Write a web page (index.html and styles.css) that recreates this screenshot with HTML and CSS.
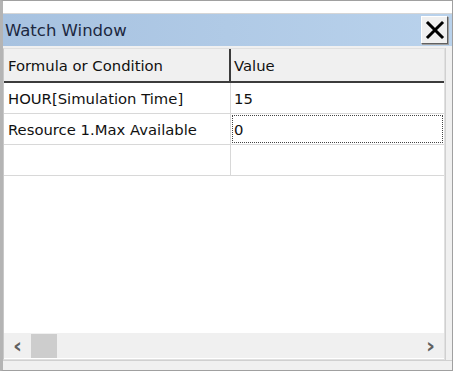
FILE: index.html
```html
<!DOCTYPE html>
<html>
<head>
<meta charset="utf-8">
<link rel="stylesheet" href="styles.css">
</head>
<body>
<div class="win">
  <div class="topstrip"></div>
  <div class="titlebar">
    <span class="title">Watch Window</span>
    <div class="close">
      <svg width="20" height="20" viewBox="0 0 20 20"><path d="M3 3 L17 17 M17 3 L3 17" stroke="#000" stroke-width="3" stroke-linecap="square"/></svg>
    </div>
  </div>
  <div class="panel">
    <div class="gridwrap">
      <div class="grid">
        <div class="row head">
          <div class="c1">Formula or Condition</div>
          <div class="c2">Value</div>
        </div>
        <div class="row">
          <div class="c1">HOUR[Simulation Time]</div>
          <div class="c2">15</div>
        </div>
        <div class="row">
          <div class="c1">Resource 1.Max Available</div>
          <div class="c2 focus">0</div>
        </div>
        <div class="row">
          <div class="c1"></div>
          <div class="c2"></div>
        </div>
      </div>
      <div class="hscroll">
        <span class="arrow">&lsaquo;</span>
        <div class="thumb"></div>
        <div class="track"></div>
        <span class="arrow">&rsaquo;</span>
      </div>
    </div>
    <div class="vedge"></div>
  </div>
  <div class="bottom"></div>
</div>
</body>
</html>
```
FILE: styles.css
```css
html, body { margin: 0; padding: 0; }
body { width: 453px; height: 371px; background: #fff; overflow: hidden; font-family: "DejaVu Sans", sans-serif; }
.win { width: 453px; height: 371px; box-sizing: border-box; border: 1px solid #a0a0a0; border-left: 3px solid #b4b4b4; display: flex; flex-direction: column; background: #fff; }
.topstrip { height: 12px; background: #fff; border-bottom: 1px solid #d6d6d6; }
.titlebar { height: 32px; background: linear-gradient(to right, #a7c2e0, #b9d2ec); display: flex; align-items: center; justify-content: space-between; padding-left: 2px; }
.title { font-family: "DejaVu Sans", sans-serif; font-size: 16.5px; color: #1c2840; margin-top: 1px; }
.close { width: 27px; height: 28px; box-sizing: border-box; background: #f0f0f0; border: 1px solid #fff; border-right-color: #606060; border-bottom-color: #606060; box-shadow: 1px 1px 0 #a0a0a0; display: flex; align-items: center; justify-content: center; margin-right: 4px; }
.panel { flex: 1; display: flex; background: #f0f0f0; border-top: 2px solid #f0f0f0; }
.gridwrap { flex: 1; display: flex; flex-direction: column; border: 1px solid #e0e0e0; border-left: 1px solid #c8c8c8; background: #fff; }
.grid { flex: 1; }
.row { display: flex; height: 30px; border-bottom: 1px solid #d8d8d8; }
.row > div { font-size: 14.8px; color: #111; display: flex; align-items: center; box-sizing: border-box; }
.c1 { width: 227px; padding-left: 4px; border-right: 1px solid #d8d8d8; }
.c2 { flex: 1; padding-left: 3px; }
.row.head { height: 32px; background: #f0f0f0; border-bottom: 2px solid #3c3c3c; }
.row.head .c1 { border-right: 2px solid #3c3c3c; }
.focus { outline: 1px dotted #444; outline-offset: -2px; }
.hscroll { height: 25px; background: #f0f0f0; display: flex; align-items: center; margin-bottom: 1px; }
.arrow { width: 27px; text-align: center; font-size: 22px; font-weight: bold; color: #606060; line-height: 25px; }
.thumb { width: 26px; height: 24px; background: #cdcdcd; }
.track { flex: 1; }
.vedge { width: 6px; border-left: 1px solid #d0d0d0; }
.bottom { height: 9px; background: #f0f0f0; border-top: 1px solid #d0d0d0; }
```
